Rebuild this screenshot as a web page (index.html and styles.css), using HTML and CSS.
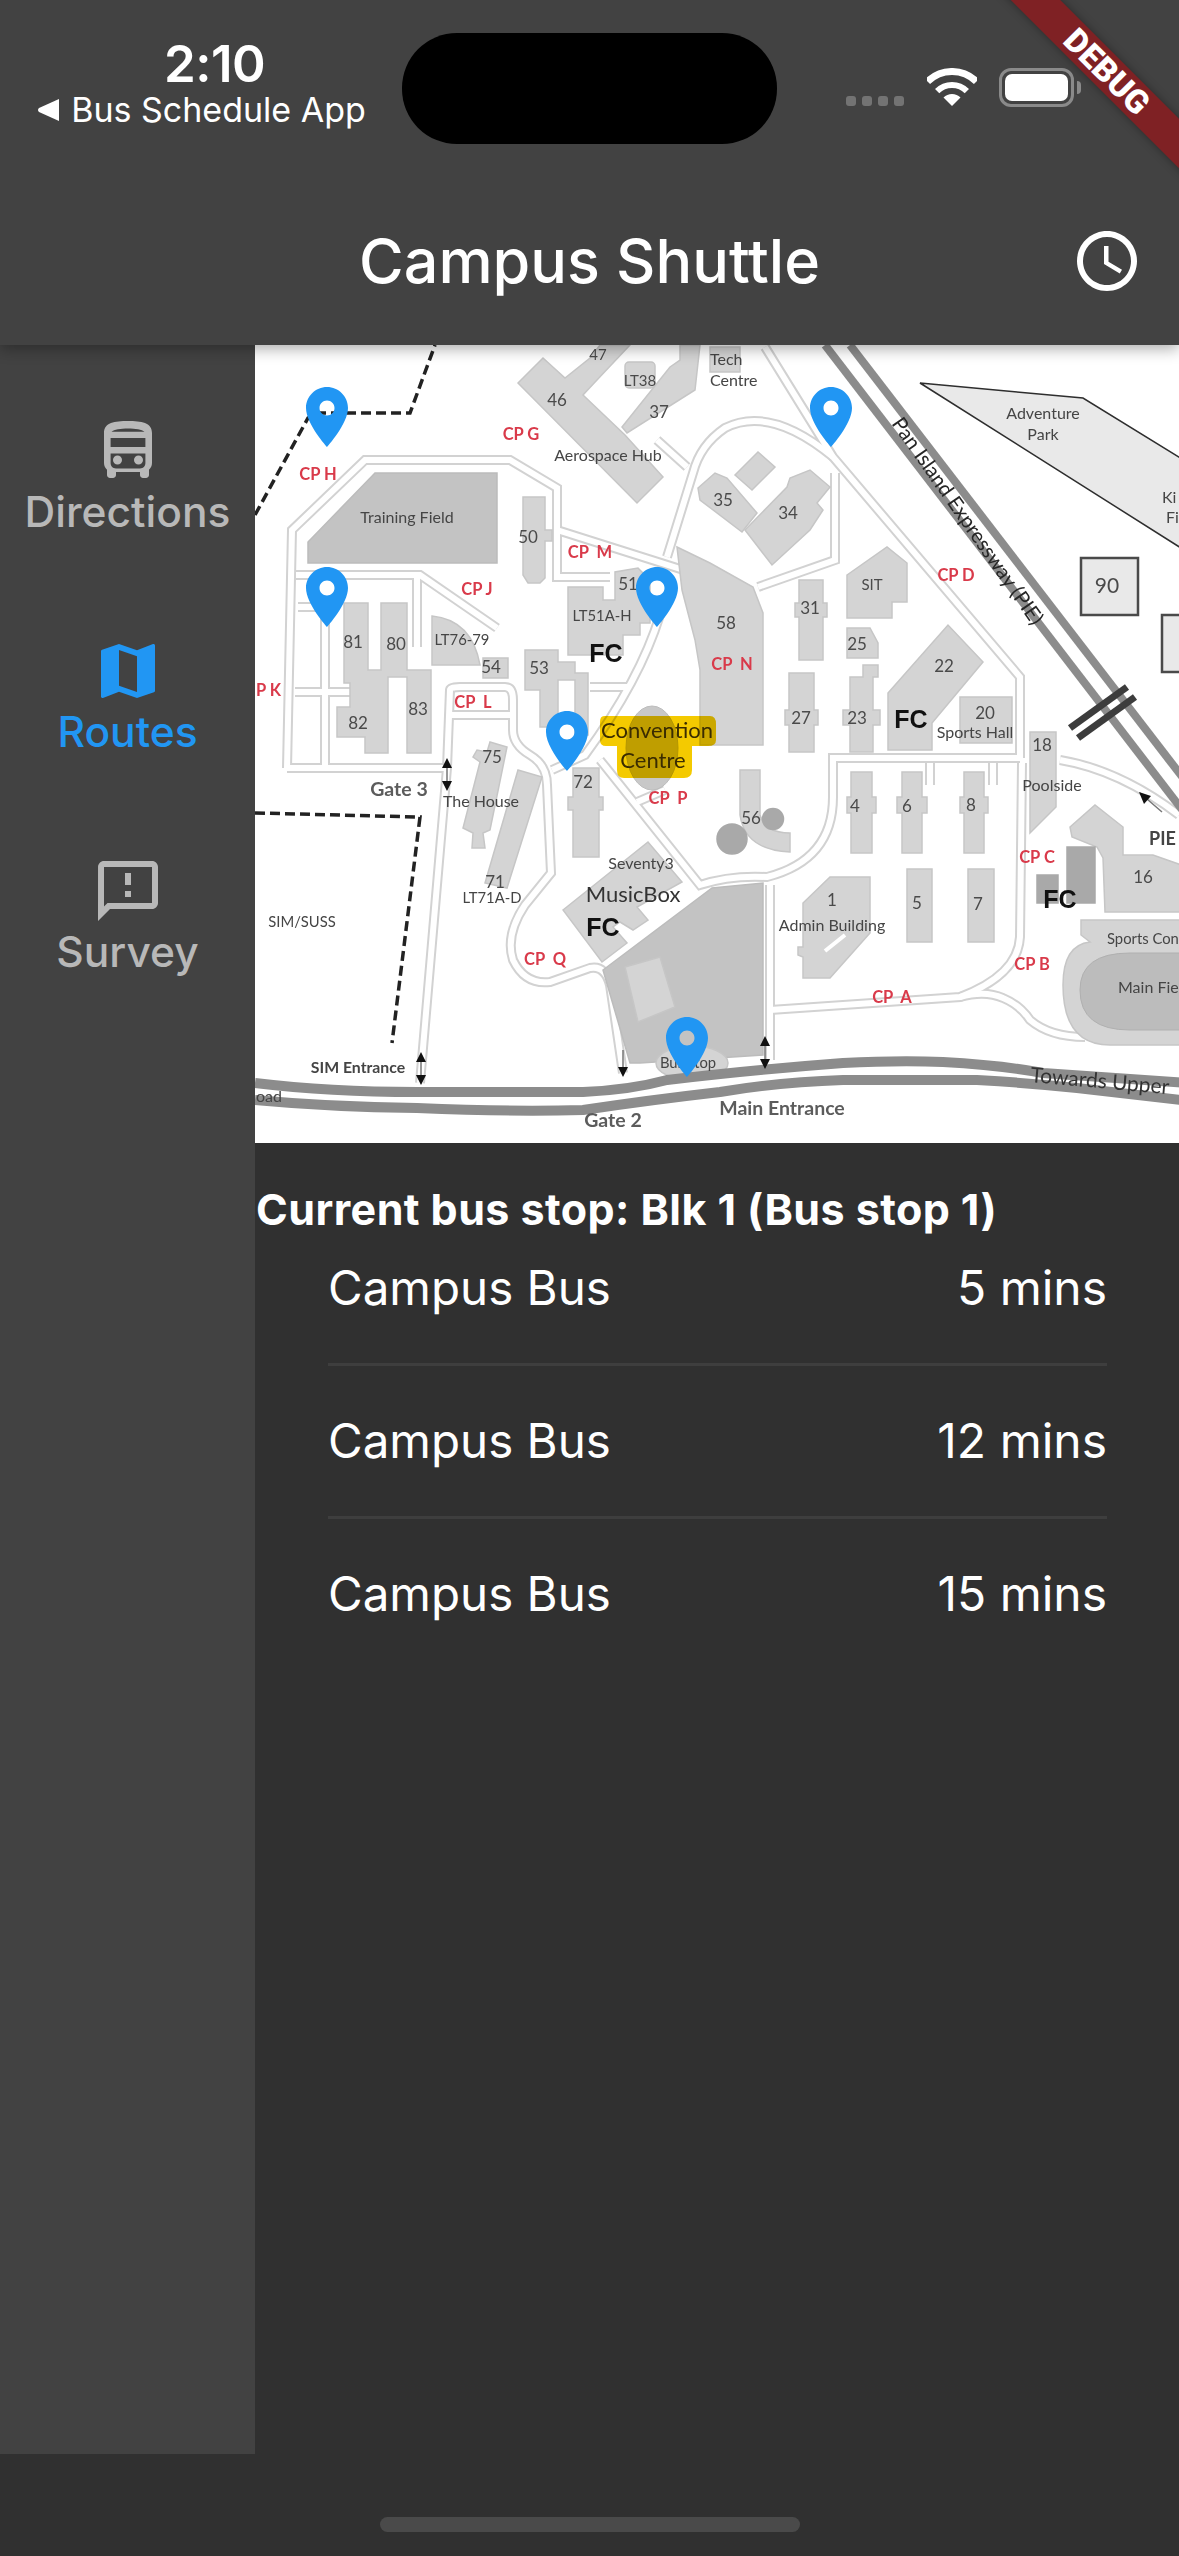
FILE: index.html
```html
<!DOCTYPE html>
<html lang="en">
<head>
<meta charset="utf-8">
<title>Campus Shuttle</title>
<link rel="stylesheet" href="styles.css">
</head>
<body>
<div class="app">
  <header class="header">
    <div class="status">
      <div class="status-left">
        <div class="time">2:10</div>
        <div class="back"><svg class="back-arrow" viewBox="0 0 22 22"><path d="M22 0V22L2 13Q0 11 2 9Z"/></svg><span>Bus Schedule App</span></div>
      </div>
      <div class="island"></div>
      <div class="status-right">
        <div class="dots"><i></i><i></i><i></i><i></i></div>
        <svg class="wifi" viewBox="0 0 50 38"><path class="wifi-arc wifi-a" d="M.6 13.6A34.5 34.5 0 0 1 49.4 13.6"/><path class="wifi-arc wifi-b" d="M10.15 23.15A21 21 0 0 1 39.85 23.15"/><path class="wifi-c" d="M25 38L16.5 29.5A12 12 0 0 1 33.5 29.5Z"/></svg>
        <div class="battery"><div class="battery-fill"></div></div>
        <div class="battery-nub"></div>
      </div>
    </div>
    <div class="title-row">
      <div></div>
      <h1 class="title">Campus Shuttle</h1>
      <div class="title-action">
        <svg class="icon clock" viewBox="0 0 24 24"><path d="M11.99 2C6.47 2 2 6.48 2 12s4.47 10 9.99 10C17.52 22 22 17.52 22 12S17.52 2 11.99 2zM12 20c-4.42 0-8-3.58-8-8s3.58-8 8-8 8 3.58 8 8-3.58 8-8 8zm.5-13H11v6l5.25 3.15.75-1.23-4.5-2.67z"/></svg>
      </div>
    </div>
  </header>

  <div class="debug"><span>DEBUG</span></div>

  <div class="main">
    <nav class="rail">
      <div class="rail-item">
        <svg class="icon" viewBox="0 0 24 24"><path fill-rule="evenodd" d="M4 6c0-3.5 3.58-4 8-4s8 .5 8 4v10c0 .88-.39 1.67-1 2.22V20c0 .55-.45 1-1 1h-1c-.55 0-1-.45-1-1v-1H8v1c0 .55-.45 1-1 1H6c-.55 0-1-.45-1-1v-1.78c-.61-.55-1-1.34-1-2.22zM6.5 5.6c.9-.8 3-1.1 5.5-1.1s4.600.3 5.500 1.100zM6.200 7.700h11.600v3H6.200zM6.200 12.800h11.600V16c0 1-.6 1.800-1.800 1.800H8c-1.200 0-1.800-.8-1.800-1.800zM8.500 13.500a1.500 1.500 0 1 0 0 3 1.500 1.500 0 0 0 0-3zM15.500 13.500a1.500 1.500 0 1 0 0 3 1.500 1.500 0 0 0 0-3z"/></svg>
        <span class="rail-label">Directions</span>
      </div>
      <div class="rail-item active">
        <svg class="icon" viewBox="0 0 24 24"><path d="M20.5 3l-.16.03L15 5.100 9 3 3.360 4.900c-.21.07-.36.25-.36.48V20.500c0 .28.22.5.5.5l.16-.03L9 18.900l6 2.100 5.640-1.900c.21-.07.36-.25.36-.48V3.500c0-.28-.22-.5-.5-.5zM15 19l-6-2.110V5l6 2.110V19z"/></svg>
        <span class="rail-label">Routes</span>
      </div>
      <div class="rail-item">
        <svg class="icon" viewBox="0 0 24 24"><path d="M20 2H4c-1.100 0-1.990.9-1.990 2L2 22l4-4h14c1.100 0 2-.9 2-2V4c0-1.100-.9-2-2-2zm0 14H5.170L4 17.170V4h16v12zm-9-4h2v2h-2zm0-6h2v4h-2z"/></svg>
        <span class="rail-label">Survey</span>
      </div>
    </nav>

    <main class="content">
      <svg class="map" viewBox="255 345 924 798" xmlns="http://www.w3.org/2000/svg">
        <defs>
          <g id="roads">
            <path d="M287,768L292,530L365,460L510,460L557,488L557,577L610,577"/>
            <path d="M287,768H447"/>
            <path d="M296,575H420L497,628"/>
            <path d="M417,578V647"/>
            <path d="M298,607H325V765"/>
            <path d="M295,692H365"/>
            <path d="M450,690L447,768L420,1083"/>
            <path d="M450,690Q450,687 460,687H505Q513,687 513,700V730Q513,745 530,755Q547,765 547,785L551,873L525,905Q505,935 513,960Q525,985 550,982L590,968Q605,965 610,985L623,1073"/>
            <path d="M450,715H510"/>
            <path d="M660,615Q640,680 585,755L552,770"/>
            <path d="M590,687H627"/>
            <path d="M600,760L700,885Q730,875 767,877Q833,860 833,797V758H1020"/>
            <path d="M637,802L665,790"/>
            <path d="M770,885V1060"/>
            <path d="M770,1010L960,997Q1018,975 1020,937L1022,763"/>
            <path d="M765,347L833,457L1020,677V758"/>
            <path d="M667,557L693,473Q700,445 725,428Q770,405 833,457"/>
            <path d="M835,473V560L758,587"/>
            <path d="M557,530L693,573"/>
            <path d="M657,440L687,467"/>
            <path d="M1060,760Q1120,770 1179,815"/>
            <path d="M960,997Q985,990 1003,998Q1020,1005 1030,1020Q1050,1037 1085,1037"/>
            <path d="M930,763V785"/>
            <path d="M993,763V785"/>
          </g>
          <path id="pin" d="M12 2C8.130 2 5 5.130 5 9c0 5.250 7 13 7 13s7-7.750 7-13c0-3.870-3.130-7-7-7zm0 9.500c-1.380 0-2.500-1.120-2.500-2.500s1.120-2.500 2.500-2.500 2.500 1.120 2.500 2.500-1.120 2.500-2.500 2.500z"/>
        </defs>
        <rect class="map-bg" x="255" y="345" width="924" height="798"/>
        <g class="map-art">
          <use href="#roads" class="road-out"/>
          <use href="#roads" class="road-in"/>

          <!-- buildings -->
          <path class="b dark" d="M375,473H497V563H308V542Z"/>
          <path class="b" d="M518,383L543,358L565,378L590,358L600,345H630L597,380L583,395L625,435L663,477L637,503Z"/>
          <path class="b" d="M670,367L680,360V345H700L695,390L627,433L622,427Z"/>
          <rect class="b" x="625" y="362" width="30" height="26" rx="4"/>
          <path class="b" d="M527,497H545V530H552V541H545V578L540,583H528L523,575V497Z"/>
          <path class="b" d="M568,587H603V600H615V572L638,568L650,580V623H640V635H623V655H568Z"/>
          <path class="b" d="M344,603H368V670H381V603H407V670H431V753H407V677H388V753H365V737H337V707H350V683H344Z"/>
          <path class="b" d="M432,616Q472,620 480,665H432Z"/>
          <rect class="b" x="483" y="658" width="25" height="20"/>
          <path class="b" d="M525,650H558V662H575V673H588V735H575V680H558V727H540V690H525Z"/>
          <path class="b" d="M677,547L710,563L753,587L763,613V745H700V670L695,640L682,590Z"/>
          <path class="b" d="M573,768H599V797H603V810H599V857H573V810H568V797H573Z"/>
          <path class="b" d="M490,742L507,747L490,830L483,833L485,848L472,848L473,833L463,828L480,762L473,757L477,750L487,752Z"/>
          <path class="b" d="M518,770L542,777L507,888L485,883Z"/>
          <path class="b" d="M563,910L648,842L682,882L637,907L648,920L633,930L620,922L613,927L627,943L602,962Z"/>
          <path class="b dark" d="M603,970L712,888L763,883V1055L640,1063H630Z"/>
          <path class="b" d="M625,967L660,957L675,1007L638,1022Z"/>
          <ellipse class="b" cx="692" cy="1063" rx="36" ry="17"/>
          <rect class="b" x="710" y="347" width="30" height="25"/>
          <path class="b" d="M698,488L715,473L727,478L757,513L742,532L700,500Z"/>
          <path class="b" d="M735,475L758,452L775,467L752,490Z"/>
          <path class="b" d="M745,530L787,487L790,478L810,470L830,487L817,503L823,510L810,530L772,565Z"/>
          <path class="b" d="M847,575L887,547L907,563V602H892V618H847Z"/>
          <path class="b" d="M799,580H823V603H827V617H823V660H799V617H795V603H799Z"/>
          <path class="b" d="M847,628H870L878,643V658H847Z"/>
          <path class="b" d="M789,673H814V710H818V725H814V752H789V725H785V710H789Z"/>
          <path class="b" d="M850,677H863V665H878V677H873V710H880V725H873V752H850V725H843V710H850Z"/>
          <path class="b" d="M888,693L948,625L983,662L932,723V750H888Z"/>
          <rect class="b" x="960" y="697" width="52" height="46"/>
          <path class="b" d="M1030,732H1056V807L1030,833Z"/>
          <path class="box" d="M1081,558H1138V615H1081Z"/>
          <path class="box" d="M1192,615H1162V672H1192Z"/>
          <path class="park" d="M920,383L1083,398L1200,470V560Z"/>
          <path class="b" d="M851,772H872V797H876V813H872V853H851V813H847V797H851Z"/>
          <path class="b" d="M902,772H922V797H927V813H922V853H902V813H897V797H902Z"/>
          <path class="b" d="M964,772H984V797H988V813H984V853H964V813H960V797H964Z"/>
          <rect class="b" x="907" y="869" width="25" height="73"/>
          <rect class="b" x="968" y="869" width="26" height="73"/>
          <path class="b" d="M830,877H870V933L830,978H803V957L798,955V947L803,947V903Z"/>
          <path class="slit" d="M825,951L845,935"/>
          <path class="b" d="M740,770H760V815Q765,833 790,833V852Q745,850 740,815Z"/>
          <circle class="b mid" cx="732" cy="839" r="15"/>
          <circle class="b mid" cx="773" cy="819" r="10.500"/>
          <path class="b" d="M1070,827L1095,805L1123,827V855H1153L1190,868V912H1105L1103,858L1097,847L1072,837Z"/>
          <rect class="b mid" x="1067" y="847" width="28" height="56"/>
          <rect class="b mid" x="1037" y="875" width="21" height="28"/>
          <path class="b" d="M1081,920H1190V1045H1110Q1063,1045 1063,985Q1063,945 1090,942L1081,935Z"/>
          <path class="field" d="M1190,953H1130Q1080,953 1080,990Q1080,1030 1130,1030H1190Z"/>

          <!-- highways -->
          <path class="hw" d="M825,345L1200,833"/>
          <path class="hw" d="M850,345L1200,800"/>
          <path class="bridge" d="M1070,728L1127,687"/>
          <path class="bridge" d="M1078,738L1135,697"/>
          <path class="hw wide" d="M255,1083Q330,1092 417,1092H583Q630,1090 667,1080Q750,1070 843,1063Q900,1060 943,1062Q1000,1065 1043,1073L1190,1083"/>
          <path class="hw wide" d="M255,1100Q330,1107 417,1108Q510,1112 583,1110Q650,1100 720,1092Q780,1082 843,1080H977Q1030,1083 1077,1088L1190,1101"/>
          <path class="dash" d="M255,515L308,418L316,413H410L435,345"/>
          <path class="dash" d="M255,813L420,817L392,1043"/>

          <!-- highlighted hall -->
          <ellipse class="dome" cx="652" cy="748" rx="26" ry="42"/>
          <path class="hl" d="M604,716H710Q716,716 716,724V740Q716,746 708,746H692V770Q692,778 684,778H624Q617,778 617,770V746H606Q600,746 600,740V722Q600,716 604,716Z"/>

          <!-- arrows -->
          <path class="shaft" d="M447,762V788M421,1056V1081M765,1040V1066M623,1050V1070M1140,793L1162,812"/>
          <path class="head" d="M442,768L447,758L452,768ZM442,781L447,791L452,781ZM416,1062L421,1052L426,1062ZM416,1075L421,1085L426,1075ZM760,1046L765,1036L770,1046ZM760,1059L765,1069L770,1059ZM618,1067L623,1077L628,1067ZM1139,792L1151,796L1144,804Z"/>

          <!-- labels -->
          <text class="t" x="407" y="523">Training Field</text>
          <text class="t" x="608" y="461">Aerospace Hub</text>
          <text class="t start" x="710" y="365">Tech</text>
          <text class="t start" x="710" y="386">Centre</text>
          <text class="t s" x="462" y="645">LT76-79</text>
          <text class="t s" x="602" y="621">LT51A-H</text>
          <text class="t" x="1043" y="419">Adventure</text>
          <text class="t" x="1043" y="440">Park</text>
          <text class="t start" x="1162" y="503">Ki</text>
          <text class="t start" x="1166" y="523">Fi</text>
          <text class="t" x="975" y="738">Sports Hall</text>
          <text class="t" x="1052" y="791">Poolside</text>
          <text class="t" x="832" y="931">Admin Building</text>
          <text class="t start s" x="1107" y="944">Sports Con</text>
          <text class="t start" x="1118" y="993">Main Fie</text>
          <text class="t" x="481" y="807">The House</text>
          <text class="t s" x="492" y="903">LT71A-D</text>
          <text class="t s" x="302" y="927">SIM/SUSS</text>
          <text class="t" x="641" y="869">Seventy3</text>
          <text class="t big" x="633" y="902">MusicBox</text>
          <text class="t s" x="688" y="1068">Bus stop</text>
          <text class="t gate" x="399" y="796">Gate 3</text>
          <text class="t gate" x="613" y="1127">Gate 2</text>
          <text class="t gate" x="782" y="1115">Main Entrance</text>
          <text class="t sim" x="358" y="1073">SIM Entrance</text>
          <text class="t gate start pie-tag" x="1149" y="845">PIE</text>
          <text class="t start" x="256" y="1102">oad</text>
          <text class="t start upper" transform="translate(1030,1082) rotate(5)">Towards Upper</text>
          <text class="t pie" transform="translate(962,525) rotate(55)">Pan Island Expressway (PIE)</text>
          <text class="t con" x="657" y="738">Convention</text>
          <text class="t con" x="653" y="768">Centre</text>

          <text class="n sit" x="598" y="360">47</text><text class="n sit" x="640" y="386">LT38</text><text class="n" x="557" y="406">46</text>
          <text class="n" x="659" y="418">37</text><text class="n" x="528" y="543">50</text><text class="n" x="628" y="590">51</text>
          <text class="n" x="353" y="648">81</text><text class="n" x="396" y="650">80</text><text class="n" x="418" y="715">83</text>
          <text class="n" x="358" y="729">82</text><text class="n" x="539" y="674">53</text><text class="n" x="491" y="673">54</text>
          <text class="n" x="726" y="629">58</text><text class="n" x="810" y="614">31</text><text class="n sit" x="872" y="590">SIT</text>
          <text class="n" x="857" y="650">25</text><text class="n" x="788" y="519">34</text><text class="n" x="723" y="506">35</text>
          <text class="n" x="801" y="724">27</text><text class="n" x="857" y="724">23</text><text class="n" x="944" y="672">22</text>
          <text class="n" x="985" y="719">20</text><text class="n large" x="1107" y="593">90</text><text class="n" x="492" y="763">75</text>
          <text class="n" x="583" y="788">72</text><text class="n" x="495" y="888">71</text><text class="n" x="1042" y="751">18</text>
          <text class="n" x="751" y="824">56</text><text class="n" x="855" y="812">4</text><text class="n" x="907" y="812">6</text>
          <text class="n" x="971" y="811">8</text><text class="n" x="832" y="906">1</text><text class="n" x="917" y="909">5</text>
          <text class="n" x="978" y="910">7</text><text class="n" x="1143" y="883">16</text>

          <text class="fc" x="606" y="662">FC</text><text class="fc" x="911" y="728">FC</text>
          <text class="fc" x="603" y="936">FC</text><text class="fc" x="1060" y="908">FC</text>

          <text class="cp" x="318" y="480">CP H</text><text class="cp" x="521" y="440">CP G</text><text class="cp" x="590" y="558">CP  M</text>
          <text class="cp" x="477" y="595">CP J</text><text class="cp" x="473" y="708">CP  L</text><text class="cp start" x="256" y="696">P K</text>
          <text class="cp" x="732" y="670">CP  N</text><text class="cp" x="956" y="581">CP D</text><text class="cp" x="668" y="804">CP  P</text>
          <text class="cp" x="545" y="965">CP  Q</text><text class="cp" x="1037" y="863">CP C</text><text class="cp" x="1032" y="970">CP B</text>
          <text class="cp" x="892" y="1003">CP  A</text>
        </g>

        <!-- stop markers -->
        <use href="#pin" class="pin" transform="translate(291,381) scale(3)"/>
        <use href="#pin" class="pin" transform="translate(291,561) scale(3)"/>
        <use href="#pin" class="pin" transform="translate(621,561) scale(3)"/>
        <use href="#pin" class="pin" transform="translate(531,705) scale(3)"/>
        <use href="#pin" class="pin" transform="translate(795,381) scale(3)"/>
        <use href="#pin" class="pin" transform="translate(651,1011) scale(3)"/>
      </svg>

      <h2 class="stop">Current bus stop: Blk 1 (Bus stop 1)</h2>
      <ul class="list">
        <li class="row"><span class="route">Campus Bus</span><span class="eta">5 mins</span></li>
        <li class="row"><span class="route">Campus Bus</span><span class="eta">12 mins</span></li>
        <li class="row"><span class="route">Campus Bus</span><span class="eta">15 mins</span></li>
      </ul>
    </main>
  </div>

  <footer class="home"><div class="home-bar"></div></footer>
</div>
</body>
</html>
```
FILE: styles.css
```css
* { box-sizing: border-box; }
html, body { margin: 0; padding: 0; background: #303030; }
body { font-family: "Inter", "Liberation Sans", sans-serif; color: #fff; }

.app {
  position: relative;
  width: 1179px;
  height: 2556px;
  overflow: hidden;
  background: #303030;
  display: flex;
  flex-direction: column;
}

/* header */
.header {
  position: relative;
  z-index: 2;
  flex: 0 0 345px;
  background: #424242;
  box-shadow: 0 4px 14px rgba(0, 0, 0, .32);
}
.status { display: flex; height: 147px; }
.status-left {
  width: 327px;
  margin-left: 38px;
  margin-right: 37px;
  padding-top: 33px;
  display: flex;
  flex-direction: column;
  align-items: center;
}
.time { font-size: 51px; font-weight: 600; line-height: 62px; margin-left: 26px; letter-spacing: -.5px; }
.back { display: flex; align-items: center; gap: 12px; font-size: 34px; line-height: 30px; white-space: nowrap; }
.back-arrow { width: 22px; height: 22px; fill: #fff; }
.island { width: 375px; height: 111px; margin-top: 33px; border-radius: 55px; background: #000; }
.status-right { display: flex; align-items: flex-end; height: 107px; margin-left: 69px; }
.dots { display: flex; gap: 6px; margin-bottom: 1px; }
.dots i { width: 10px; height: 10px; border-radius: 3px; background: #737373; }
.wifi { width: 50px; height: 38px; margin-left: 23px; margin-bottom: 1px; }
.wifi-arc { fill: none; stroke: #fff; }
.wifi-a { stroke-width: 7; }
.wifi-b { stroke-width: 6; }
.wifi-c { fill: #fff; }
.battery {
  width: 75px;
  height: 39px;
  margin-left: 22px;
  padding: 3px;
  border: 3px solid #8a8a8a;
  border-radius: 12px;
}
.battery-fill { height: 100%; background: #fff; border-radius: 7px; }
.battery-nub { width: 4px; height: 13px; margin: 0 0 13px 3px; background: #8a8a8a; border-radius: 0 5px 5px 0; }

.title-row {
  height: 198px;
  padding-top: 30px;
  display: grid;
  grid-template-columns: 1fr auto 1fr;
  align-items: center;
}
.title { margin: 0; font-size: 61px; font-weight: 500; line-height: 72px; }
.title-action { display: flex; justify-content: flex-end; padding-right: 36px; }
.icon { display: block; width: 72px; height: 72px; fill: currentColor; }
.clock { color: #fff; }

/* debug ribbon */
.debug {
  position: absolute;
  z-index: 3;
  top: 54px;
  right: -128px;
  width: 400px;
  height: 35px;
  transform: rotate(45deg);
  background: #7f2124;
  box-shadow: 0 0 10px rgba(0, 0, 0, .35);
  display: flex;
  align-items: center;
  justify-content: center;
  font-family: "Roboto", "Liberation Sans", sans-serif;
  font-size: 33px;
  font-weight: 900;
  line-height: 35px;
}

/* body */
.main { flex: 0 0 2109px; display: flex; }
.rail {
  flex: 0 0 255px;
  background: #424242;
  padding-top: 70px;
  display: flex;
  flex-direction: column;
}
.rail-item {
  height: 220px;
  display: flex;
  flex-direction: column;
  align-items: center;
  color: #b8b8b8;
}
.rail-item.active { color: #2196f3; }
.rail-label { font-size: 42.500px; font-weight: 500; line-height: 50px; }

.content { flex: 1; min-width: 0; }
.map { display: block; width: 924px; height: 798px; }
.stop { margin: 52px 0 0 1px; font-size: 43px; font-weight: 700; line-height: 28px; letter-spacing: .43px; white-space: nowrap; }
.list { list-style: none; margin: 0 72px 0 73px; padding: 0; }
.row {
  display: flex;
  justify-content: space-between;
  line-height: 50px;
  padding: 50px 0;
  border-bottom: 3px solid #3e3e3e;
}
.row:first-child { padding-top: 40px; }
.row:last-child { border-bottom: 0; }
.route { font-size: 47.500px; }
.eta { font-size: 48px; }

.home { flex: 0 0 102px; padding-top: 63px; display: flex; justify-content: center; }
.home-bar { width: 420px; height: 15px; border-radius: 8px; background: #4a4a4a; }

/* map drawing */
.map-bg { fill: #fff; }
.map-art { filter: blur(.65px); }
.road-out { fill: none; stroke: #d2d2d2; stroke-width: 10; }
.road-in { fill: none; stroke: #fff; stroke-width: 6; }
.b { fill: #d4d4d4; stroke: #c6c6c6; stroke-width: 1.500; }
.b.dark { fill: #c3c3c3; stroke: #bcbcbc; }
.b.mid { fill: #a9a9a9; stroke: #a9a9a9; }
.box { fill: #e9e9e9; stroke: #4a4a4a; stroke-width: 2.500; }
.park { fill: #e9e9e9; stroke: #2e2e2e; stroke-width: 1.500; }
.field { fill: #bcbcbc; stroke: #b0b0b0; }
.slit { fill: none; stroke: #fff; stroke-width: 4; }
.hw { fill: none; stroke: #8c8c8c; stroke-width: 8; }
.hw.wide { stroke-width: 10; }
.bridge { fill: none; stroke: #3c3c3c; stroke-width: 7; }
.dash { fill: none; stroke: #222; stroke-width: 3.500; stroke-dasharray: 10 5; }
.dome { fill: #c8c8c8; stroke: #bcbcbc; }
.hl { fill: #f4ca00; mix-blend-mode: multiply; }
.shaft { fill: none; stroke: #777; stroke-width: 1.500; }
.head { fill: #111; }

.map text { font-family: "Lato", "Open Sans", sans-serif; }
.t { font-size: 16px; fill: #454545; text-anchor: middle; }
.t.s { font-size: 14.800px; }
.t.start { text-anchor: start; }
.t.big { font-size: 22px; fill: #333; }
.t.gate { font-size: 19.500px; font-weight: 700; fill: #5c5c5c; }
.t.pie-tag { font-size: 18px; fill: #444; }
.t.sim { font-size: 15.800px; font-weight: 700; fill: #444; }
.t.pie { font-size: 20.500px; fill: #262626; }
.t.upper { font-size: 21px; fill: #333; }
.t.con { font-size: 22px; fill: #3a2c00; }
.n { font-size: 17px; fill: #4a4a4a; text-anchor: middle; }
.n.sit { font-size: 15px; }
.n.large { font-size: 21px; }
.map text.fc { font-family: "Liberation Sans", sans-serif; font-size: 25px; font-weight: 700; fill: #111; text-anchor: middle; }
.cp { font-size: 16.500px; font-weight: 700; fill: #d93a4a; text-anchor: middle; white-space: pre; }
.cp.start { text-anchor: start; }
.pin { fill: #2196f3; }
```
